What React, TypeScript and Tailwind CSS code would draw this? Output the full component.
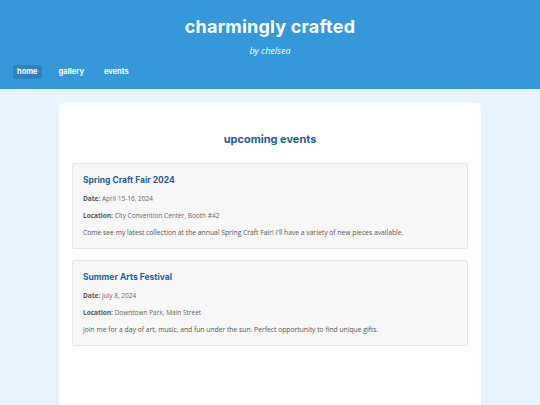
const events = [
  {
    title: "Spring Craft Fair 2024",
    date: "April 15-16, 2024",
    location: "City Convention Center, Booth #42",
    description:
      "Come see my latest collection at the annual Spring Craft Fair! I'll have a variety of new pieces available.",
  },
  {
    title: "Summer Arts Festival",
    date: "July 8, 2024",
    location: "Downtown Park, Main Street",
    description:
      "Join me for a day of art, music, and fun under the sun. Perfect opportunity to find unique gifts.",
  },
];

const heading = { fontFamily: "Inter, 'Noto Sans', sans-serif" };

function App() {
  return (
    <div className="min-h-[405px] bg-[#e8f4fd] font-['Open_Sans',sans-serif]">
      {/* header */}
      <header className="bg-[#3498db] text-white h-[89px] flex flex-col">
        <div className="flex flex-col items-center pt-[16px]">
          <h1 className="text-[18px] font-bold leading-[22px] tracking-[0.2px]" style={heading}>
            charmingly crafted
          </h1>
          <p className="text-[9px] italic mt-[7px] leading-[12px]">by chelsea</p>
        </div>
        <nav className="flex items-center px-[13px] mt-[8px]">
          <a className="px-[4px] h-[14px] flex items-center rounded-[2px] bg-[#2d82c0] text-[7.5px] font-bold" style={heading}>
            home
          </a>
          <a className="ml-[17px] h-[14px] flex items-center text-[7.5px] font-bold" style={heading}>
            gallery
          </a>
          <a className="ml-[20px] h-[14px] flex items-center text-[7.5px] font-bold" style={heading}>
            events
          </a>
        </nav>
      </header>

      {/* main */}
      <main className="flex justify-center pt-[14px]">
        <section className="w-[422px] min-h-[310px] bg-white rounded-t-[5px] px-[13px] pt-[28px] pb-[20px]">
          <h2 className="text-center text-[11px] font-bold text-[#1c5f99] leading-[16px]" style={heading}>
            upcoming events
          </h2>
          <div className="flex flex-col gap-[11px] mt-[16px]">
            {events.map((ev) => (
              <div key={ev.title} className="bg-[#f8f8f9] border border-[#e3e5e8] rounded-[3px] px-[10px] pt-[9px] pb-[10px]">
                <h3 className="text-[8.5px] font-bold text-[#1c5f99] leading-[14px]" style={heading}>
                  {ev.title}
                </h3>
                <p className="mt-[7px] text-[6.5px] text-[#666] leading-[10px]">
                  <span className="font-bold text-[6.5px] text-[#555]">Date:</span> {ev.date}
                </p>
                <p className="mt-[7px] text-[6.5px] text-[#666] leading-[10px]">
                  <span className="font-bold text-[6.5px] text-[#555]">Location:</span> {ev.location}
                </p>
                <p className="mt-[7px] text-[6.75px] text-[#555] leading-[10px]">{ev.description}</p>
              </div>
            ))}
          </div>
        </section>
      </main>
    </div>
  );
}

export default App;
